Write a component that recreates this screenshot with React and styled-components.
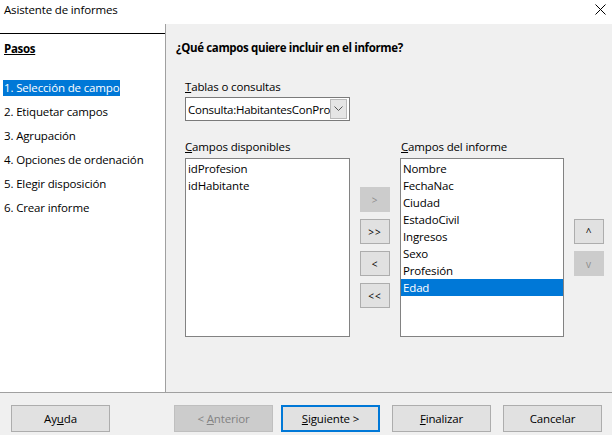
import React from 'react';
import styled, { createGlobalStyle } from 'styled-components';

const GlobalStyle = createGlobalStyle`
  html, body {
    margin: 0;
    padding: 0;
    background: #ffffff;
  }
  body {
    font-family: "Open Sans", "Noto Sans", "Liberation Sans", sans-serif;
    font-size: 11.5px;
    letter-spacing: -0.15px;
    color: #000;
  }
`;

const Window = styled.div`
  width: 612px;
  height: 435px;
  display: flex;
  flex-direction: column;
  background: #f0f0f0;
  overflow: hidden;
`;

const TitleBar = styled.div`
  height: 24px;
  display: flex;
  align-items: center;
  justify-content: space-between;
  padding: 0 6px 6px 4px;
  box-sizing: border-box;
  background: #fff;
`;

const Title = styled.span`
  font-size: 11.5px;
`;

const Body = styled.div`
  display: flex;
  height: 368px;
`;

const Sidebar = styled.div`
  width: 165px;
  background: #fff;
  border-right: 1px solid #a0a0a0;
  display: flex;
  flex-direction: column;
`;

const Rule = styled.div`
  margin-top: 9px;
  height: 1px;
  background: #000;
`;

const StepsTitle = styled.div`
  margin: 7px 0 0 4px;
  line-height: 16px;
  font-weight: 700;
  letter-spacing: -0.3px;
  text-decoration: underline;
`;

const StepList = styled.div`
  margin-top: 23px;
  display: flex;
  flex-direction: column;
  align-items: flex-start;
  gap: 8px;
  padding-left: 3px;
`;

const Step = styled.div`
  line-height: 16px;
  padding: 0 1px;
  background: ${p => (p.$active ? '#0078d7' : 'transparent')};
  color: ${p => (p.$active ? '#fff' : '#000')};
`;

const Main = styled.div`
  flex: 1;
  padding: 16px 0 0 10px;
`;

const Heading = styled.div`
  font-weight: 700;
  line-height: 16px;
  letter-spacing: -0.35px;
`;

const Content = styled.div`
  padding-left: 9px;
`;

const Label = styled.div`
  line-height: 16px;
  margin-top: ${p => p.$top || 0}px;
  margin-left: ${p => p.$ml || 0}px;
`;

const Combo = styled.div`
  margin-top: 2px;
  width: 165px;
  height: 24px;
  box-sizing: border-box;
  border: 1px solid #7a7a7a;
  background: #fff;
  display: flex;
  align-items: center;
  padding: 0 2px 0 2px;
`;

const ComboText = styled.span`
  flex: 1;
  white-space: nowrap;
  letter-spacing: -0.25px;
`;

const ComboButton = styled.div`
  width: 15px;
  height: 18px;
  background: #e5e5e5;
  border: 1px solid #b9b9b9;
  display: flex;
  align-items: center;
  justify-content: center;
`;

const FieldGrid = styled.div`
  margin-top: 18px;
  display: grid;
  grid-template-columns: 165px 30px 164px 30px;
  grid-template-rows: 16px 179px;
  column-gap: 10px;
  row-gap: 3px;
`;

const ListBox = styled.div`
  grid-row: 2;
  box-sizing: border-box;
  border: 1px solid #828282;
  background: #fff;
  padding-top: 1px;
`;

const ListItem = styled.div`
  line-height: 17px;
  padding-left: 2px;
  background: ${p => (p.$selected ? '#0078d7' : 'transparent')};
  color: ${p => (p.$selected ? '#fff' : '#000')};
`;

const ButtonColumn = styled.div`
  grid-row: 2;
  padding-top: ${p => p.$top}px;
  display: flex;
  flex-direction: column;
  gap: 7px;
`;

const SmallButton = styled.div`
  width: 30px;
  height: 25px;
  box-sizing: border-box;
  display: flex;
  align-items: center;
  justify-content: center;
  font-size: 10px;
  letter-spacing: 1px;
  background: ${p => (p.$disabled ? '#cccccc' : '#e1e1e1')};
  border: 1px solid ${p => (p.$disabled ? '#cccccc' : '#adadad')};
  color: ${p => (p.$disabled ? '#8c8c8c' : '#000')};
`;

const Footer = styled.div`
  flex: 1;
  border-top: 1px solid #a0a0a0;
  display: flex;
  align-items: flex-start;
  padding: 12px 0 0 11px;
`;

const Button = styled.div`
  width: 99px;
  height: 27px;
  box-sizing: border-box;
  margin-left: ${p => p.$ml || 0}px;
  display: flex;
  align-items: center;
  justify-content: center;
  background: ${p => (p.$disabled ? '#cccccc' : '#e1e1e1')};
  border: ${p => (p.$default ? '2px solid #0078d7' : p.$disabled ? '1px solid #bfbfbf' : '1px solid #adadad')};
  color: ${p => (p.$disabled ? '#838383' : '#000')};
`;

const steps = [
  '1. Selección de campo',
  '2. Etiquetar campos',
  '3. Agrupación',
  '4. Opciones de ordenación',
  '5. Elegir disposición',
  '6. Crear informe',
];

const available = ['idProfesion', 'idHabitante'];
const selected = ['Nombre', 'FechaNac', 'Ciudad', 'EstadoCivil', 'Ingresos', 'Sexo', 'Profesión', 'Edad'];

export default function App() {
  return (
    <Window>
      <GlobalStyle />
      <TitleBar>
        <Title>Asistente de informes</Title>
        <svg width="11" height="11" viewBox="0 0 11 11">
          <path d="M0.5 0.5 L10.5 10.5 M10.5 0.5 L0.5 10.5" stroke="#000" strokeWidth="1" />
        </svg>
      </TitleBar>
      <Body>
        <Sidebar>
          <Rule />
          <StepsTitle>Pasos</StepsTitle>
          <StepList>
            {steps.map((s, i) => (
              <Step key={s} $active={i === 0}>{s}</Step>
            ))}
          </StepList>
        </Sidebar>
        <Main>
          <Heading>¿Qué campos quiere incluir en el informe?</Heading>
          <Content>
            <Label $top={23}><u>T</u>ablas o consultas</Label>
            <Combo>
              <ComboText>Consulta:HabitantesConPro</ComboText>
              <ComboButton>
                <svg width="9" height="6" viewBox="0 0 9 6">
                  <path d="M0.5 0.5 L4.5 4.5 L8.5 0.5" stroke="#555" strokeWidth="1" fill="none" />
                </svg>
              </ComboButton>
            </Combo>
            <FieldGrid>
              <Label><u>C</u>ampos disponibles</Label>
              <div />
              <Label $ml={1}><u>C</u>ampos del informe</Label>
              <div />
              <ListBox>
                {available.map(f => (
                  <ListItem key={f}>{f}</ListItem>
                ))}
              </ListBox>
              <ButtonColumn $top={29}>
                <SmallButton $disabled>&gt;</SmallButton>
                <SmallButton>&gt;&gt;</SmallButton>
                <SmallButton>&lt;</SmallButton>
                <SmallButton>&lt;&lt;</SmallButton>
              </ButtonColumn>
              <ListBox>
                {selected.map(f => (
                  <ListItem key={f} $selected={f === 'Edad'}>{f}</ListItem>
                ))}
              </ListBox>
              <ButtonColumn $top={61}>
                <SmallButton>^</SmallButton>
                <SmallButton $disabled>v</SmallButton>
              </ButtonColumn>
            </FieldGrid>
          </Content>
        </Main>
      </Body>
      <Footer>
        <Button><span>Ay<u>u</u>da</span></Button>
        <Button $ml={64} $disabled><span>&lt; <u>A</u>nterior</span></Button>
        <Button $ml={8} $default><span><u>S</u>iguiente &gt;</span></Button>
        <Button $ml={12}><span><u>F</u>inalizar</span></Button>
        <Button $ml={12}><span>Cancelar</span></Button>
      </Footer>
    </Window>
  );
}
